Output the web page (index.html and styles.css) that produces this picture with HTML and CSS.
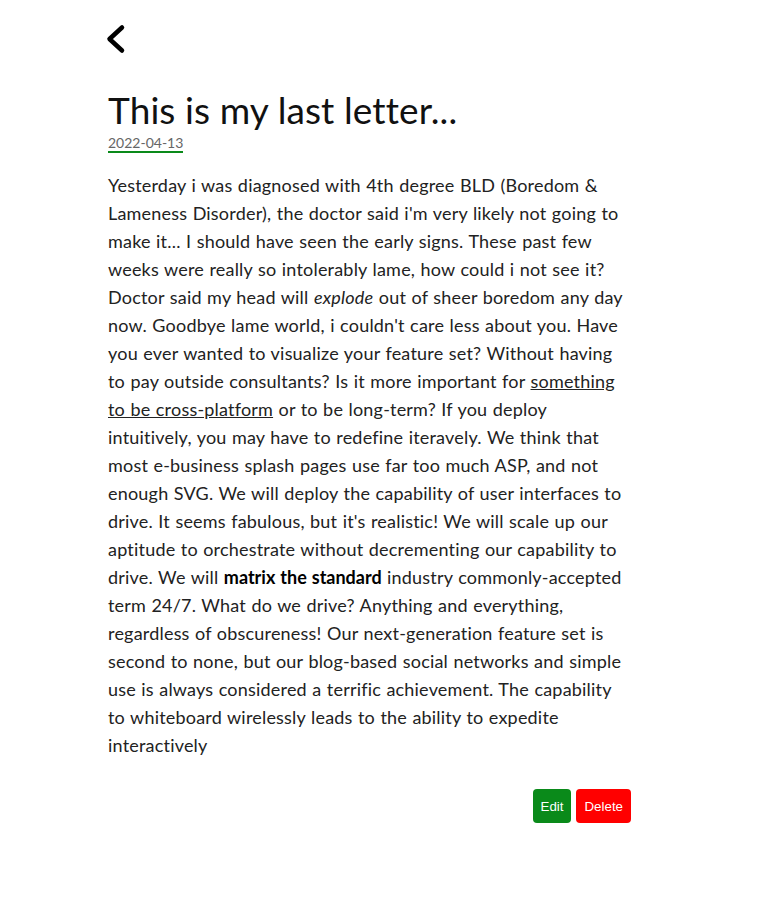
FILE: index.html
```html
<!DOCTYPE html>
<html lang="en">
<head>
<meta charset="utf-8">
<title>This is my last letter...</title>
<link rel="stylesheet" href="styles.css">
</head>
<body>
<main class="page">
  <a class="back" href="#" aria-label="Back">
    <svg width="22" height="30" viewBox="0 0 22 30" fill="none" stroke="#000" stroke-width="4.5" stroke-linecap="round" stroke-linejoin="round"><path d="M16 3.5 L3.5 15 L16 26.5"/></svg>
  </a>
  <article class="post">
    <h1 class="title">This is my last letter...</h1>
    <a class="date" href="#">2022-04-13</a>
    <p class="body">Yesterday i was diagnosed with 4th degree BLD (Boredom &amp; Lameness Disorder), the doctor said i'm very likely not going to make it... I should have seen the early signs. These past few weeks were really so intolerably lame, how could i not see it? Doctor said my head will <em>explode</em> out of sheer boredom any day now. Goodbye lame world, i couldn't care less about you. Have you ever wanted to visualize your feature set? Without having to pay outside consultants? Is it more important for <a class="link" href="#">something to be cross-platform</a> or to be long-term? If you deploy intuitively, you may have to redefine iteravely. We think that most e-business splash pages use far too much ASP, and not enough SVG. We will deploy the capability of user interfaces to drive. It seems fabulous, but it's realistic! We will scale up our aptitude to orchestrate without decrementing our capability to drive. We will <strong>matrix the standard</strong> industry commonly-accepted term 24/7. What do we drive? Anything and everything, regardless of obscureness! Our next-generation feature set is second to none, but our blog-based social networks and simple use is always considered a terrific achievement. The capability to whiteboard wirelessly leads to the ability to expedite interactively</p>
    <div class="actions">
      <button class="btn btn-edit">Edit</button>
      <button class="btn btn-delete">Delete</button>
    </div>
  </article>
</main>
</body>
</html>
```

FILE: styles.css
```css
html, body {
  margin: 0;
  padding: 0;
  background: #fff;
}
body {
  font-family: Lato, "Open Sans", sans-serif;
  color: #222;
}
.page {
  width: 523px;
  margin-left: 108px;
  padding-top: 24px;
}
.back {
  display: block;
  width: 22px;
  height: 30px;
  margin-left: -2px;
}
.back svg { display: block; }
.post {
  display: flex;
  flex-direction: column;
  align-items: flex-start;
  margin-top: 35px;
}
.title {
  margin: 0;
  font-size: 37px;
  font-weight: 400;
  letter-spacing: 0.1px;
  line-height: 42px;
  color: #111;
}
.date {
  font-size: 14px;
  line-height: 16px;
  color: #666;
  text-decoration: none;
  border-bottom: 2px solid #0a8a1a;
  margin-top: 4px;
}
.body {
  margin: 18px 0 0;
  font-size: 18px;
  line-height: 28px;
  letter-spacing: 0.2px;
  word-spacing: 0.6px;
  color: #222;
}
.body em { font-style: italic; }
.body strong { font-weight: 700; color: #000; letter-spacing: 0; }
.link { color: #222; text-decoration: underline; }
.actions {
  align-self: stretch;
  display: flex;
  justify-content: flex-end;
  gap: 5px;
  margin-top: 30px;
}
.btn {
  font-family: "Liberation Sans", Arial, sans-serif;
  font-size: 13.33px;
  color: #fff;
  border: none;
  border-radius: 4px;
  height: 34px;
  padding: 0 8px;
  cursor: pointer;
}
.btn-edit { background: #0a8a1a; }
.btn-delete { background: #ff0000; }
```
